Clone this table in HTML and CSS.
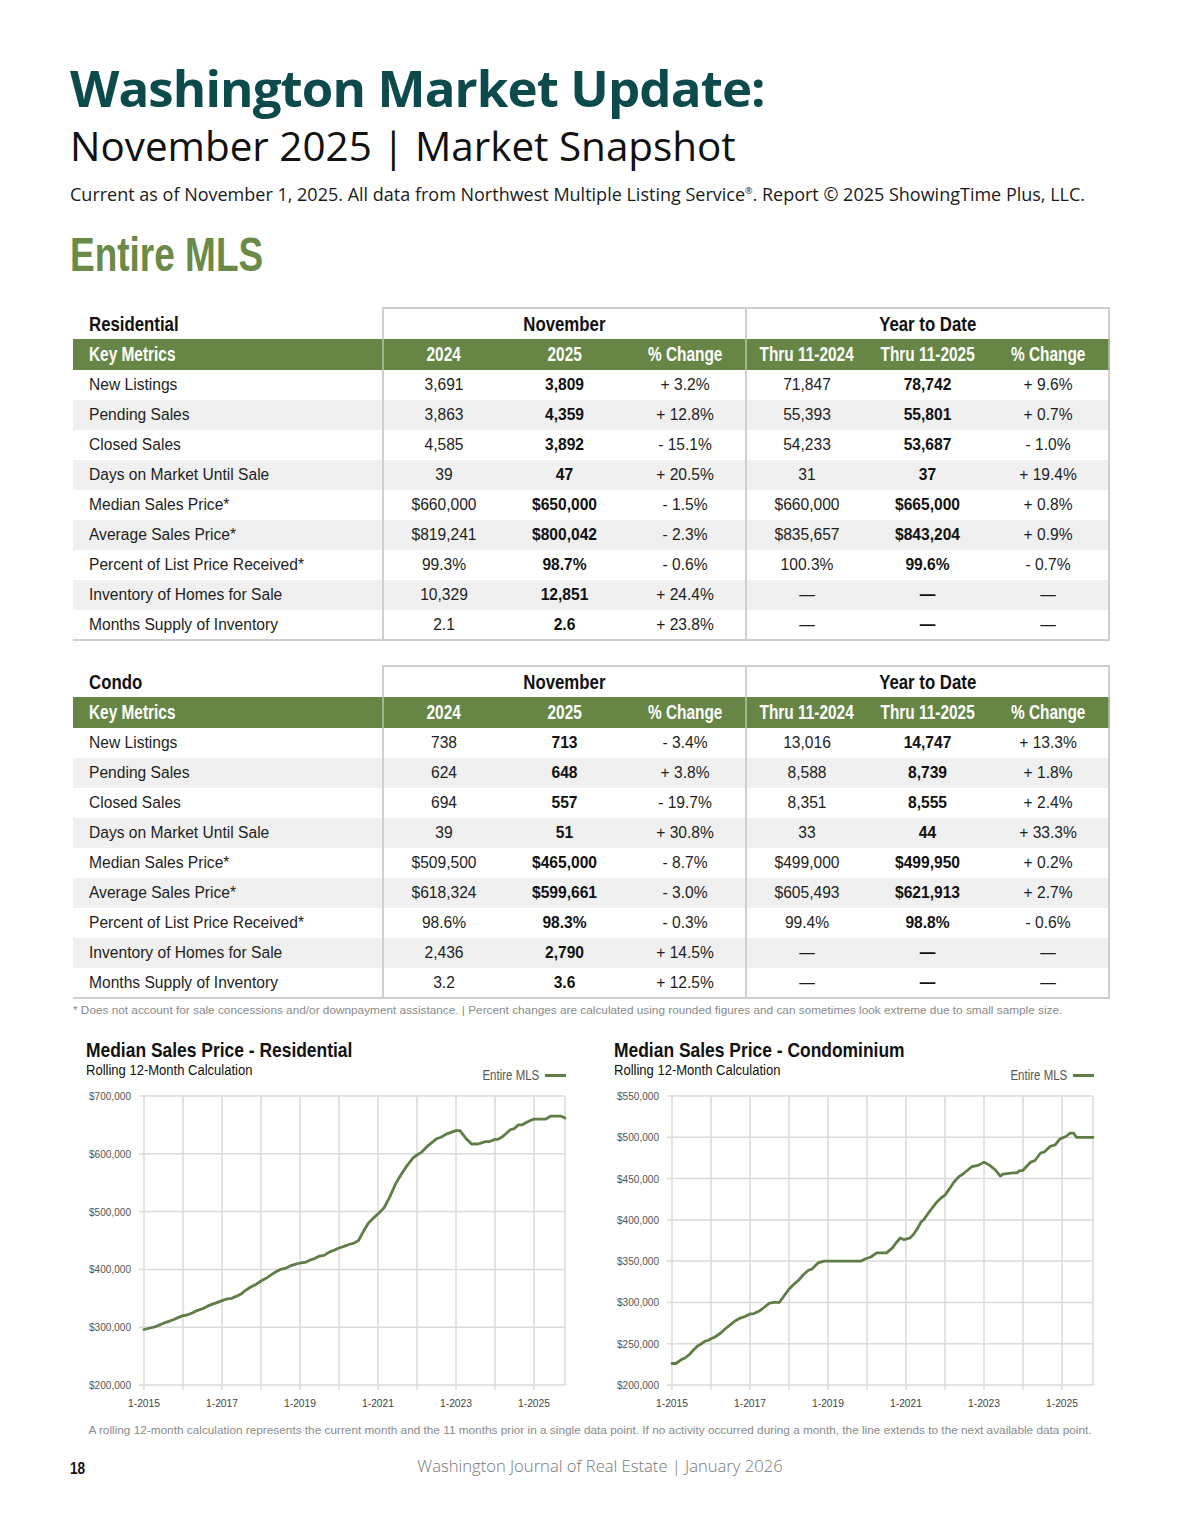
FILE: index.html
```html
<!DOCTYPE html>
<html lang="en">
<head>
<meta charset="utf-8">
<title>Washington Market Update: November 2025</title>
<link rel="stylesheet" href="styles.css">
</head>
<body>
<div class="page">
  <h1 class="title">Washington Market Update:</h1>
  <h2 class="subtitle">November 2025 | Market Snapshot</h2>
  <p class="source">Current as of November 1, 2025. All data from Northwest Multiple Listing Service<sup>®</sup>. Report © 2025 ShowingTime Plus, LLC.</p>
  <h3 class="section"><span class="cx">Entire MLS</span></h3>

  <table class="metrics">
    <colgroup><col class="c-name"><col class="c-num"><col class="c-num"><col class="c-num"><col class="c-num"><col class="c-num"><col class="c-num"></colgroup>
    <thead>
      <tr class="group-row"><th class="label"><span class="cx">Residential</span></th><th colspan="3" class="grp first"><span class="cx">November</span></th><th colspan="3" class="grp ytd last"><span class="cx">Year to Date</span></th></tr>
      <tr class="green-row"><th class="label"><span class="cx">Key Metrics</span></th><th class="first"><span class="cx">2024</span></th><th><span class="cx">2025</span></th><th><span class="cx">% Change</span></th><th class="ytd"><span class="cx">Thru 11-2024</span></th><th><span class="cx">Thru 11-2025</span></th><th class="last"><span class="cx">% Change</span></th></tr>
    </thead>
    <tbody>
      <tr><td class="label">New Listings</td><td class="first">3,691</td><td class="b">3,809</td><td>+ 3.2%</td><td class="ytd">71,847</td><td class="b">78,742</td><td class="last">+ 9.6%</td></tr>
      <tr class="alt"><td class="label">Pending Sales</td><td class="first">3,863</td><td class="b">4,359</td><td>+ 12.8%</td><td class="ytd">55,393</td><td class="b">55,801</td><td class="last">+ 0.7%</td></tr>
      <tr><td class="label">Closed Sales</td><td class="first">4,585</td><td class="b">3,892</td><td>- 15.1%</td><td class="ytd">54,233</td><td class="b">53,687</td><td class="last">- 1.0%</td></tr>
      <tr class="alt"><td class="label">Days on Market Until Sale</td><td class="first">39</td><td class="b">47</td><td>+ 20.5%</td><td class="ytd">31</td><td class="b">37</td><td class="last">+ 19.4%</td></tr>
      <tr><td class="label">Median Sales Price*</td><td class="first">$660,000</td><td class="b">$650,000</td><td>- 1.5%</td><td class="ytd">$660,000</td><td class="b">$665,000</td><td class="last">+ 0.8%</td></tr>
      <tr class="alt"><td class="label">Average Sales Price*</td><td class="first">$819,241</td><td class="b">$800,042</td><td>- 2.3%</td><td class="ytd">$835,657</td><td class="b">$843,204</td><td class="last">+ 0.9%</td></tr>
      <tr><td class="label">Percent of List Price Received*</td><td class="first">99.3%</td><td class="b">98.7%</td><td>- 0.6%</td><td class="ytd">100.3%</td><td class="b">99.6%</td><td class="last">- 0.7%</td></tr>
      <tr class="alt"><td class="label">Inventory of Homes for Sale</td><td class="first">10,329</td><td class="b">12,851</td><td>+ 24.4%</td><td class="ytd">—</td><td class="b">—</td><td class="last">—</td></tr>
      <tr class="end"><td class="label">Months Supply of Inventory</td><td class="first">2.1</td><td class="b">2.6</td><td>+ 23.8%</td><td class="ytd">—</td><td class="b">—</td><td class="last">—</td></tr>
    </tbody>
  </table>

  <table class="metrics second">
    <colgroup><col class="c-name"><col class="c-num"><col class="c-num"><col class="c-num"><col class="c-num"><col class="c-num"><col class="c-num"></colgroup>
    <thead>
      <tr class="group-row"><th class="label"><span class="cx">Condo</span></th><th colspan="3" class="grp first"><span class="cx">November</span></th><th colspan="3" class="grp ytd last"><span class="cx">Year to Date</span></th></tr>
      <tr class="green-row"><th class="label"><span class="cx">Key Metrics</span></th><th class="first"><span class="cx">2024</span></th><th><span class="cx">2025</span></th><th><span class="cx">% Change</span></th><th class="ytd"><span class="cx">Thru 11-2024</span></th><th><span class="cx">Thru 11-2025</span></th><th class="last"><span class="cx">% Change</span></th></tr>
    </thead>
    <tbody>
      <tr><td class="label">New Listings</td><td class="first">738</td><td class="b">713</td><td>- 3.4%</td><td class="ytd">13,016</td><td class="b">14,747</td><td class="last">+ 13.3%</td></tr>
      <tr class="alt"><td class="label">Pending Sales</td><td class="first">624</td><td class="b">648</td><td>+ 3.8%</td><td class="ytd">8,588</td><td class="b">8,739</td><td class="last">+ 1.8%</td></tr>
      <tr><td class="label">Closed Sales</td><td class="first">694</td><td class="b">557</td><td>- 19.7%</td><td class="ytd">8,351</td><td class="b">8,555</td><td class="last">+ 2.4%</td></tr>
      <tr class="alt"><td class="label">Days on Market Until Sale</td><td class="first">39</td><td class="b">51</td><td>+ 30.8%</td><td class="ytd">33</td><td class="b">44</td><td class="last">+ 33.3%</td></tr>
      <tr><td class="label">Median Sales Price*</td><td class="first">$509,500</td><td class="b">$465,000</td><td>- 8.7%</td><td class="ytd">$499,000</td><td class="b">$499,950</td><td class="last">+ 0.2%</td></tr>
      <tr class="alt"><td class="label">Average Sales Price*</td><td class="first">$618,324</td><td class="b">$599,661</td><td>- 3.0%</td><td class="ytd">$605,493</td><td class="b">$621,913</td><td class="last">+ 2.7%</td></tr>
      <tr><td class="label">Percent of List Price Received*</td><td class="first">98.6%</td><td class="b">98.3%</td><td>- 0.3%</td><td class="ytd">99.4%</td><td class="b">98.8%</td><td class="last">- 0.6%</td></tr>
      <tr class="alt"><td class="label">Inventory of Homes for Sale</td><td class="first">2,436</td><td class="b">2,790</td><td>+ 14.5%</td><td class="ytd">—</td><td class="b">—</td><td class="last">—</td></tr>
      <tr class="end"><td class="label">Months Supply of Inventory</td><td class="first">3.2</td><td class="b">3.6</td><td>+ 12.5%</td><td class="ytd">—</td><td class="b">—</td><td class="last">—</td></tr>
    </tbody>
  </table>
  <p class="footnote">* Does not account for sale concessions and/or downpayment assistance. | Percent changes are calculated using rounded figures and can sometimes look extreme due to small sample size.</p>

  <div class="charts">
    <div class="chart">
      <div class="chart-head">
        <div class="chart-titles">
          <div class="chart-title"><span class="cx">Median Sales Price - Residential</span></div>
          <div class="chart-sub"><span class="cx">Rolling 12-Month Calculation</span></div>
        </div>
        <div class="legend"><span class="cx">Entire MLS</span><span class="legend-line"></span></div>
      </div>
      <svg class="plot" width="490" height="326" viewBox="0 0 490 326">
        <g class="grid">
          <line x1="64" y1="10" x2="485" y2="10"/><line x1="64" y1="67.8" x2="485" y2="67.8"/><line x1="64" y1="125.6" x2="485" y2="125.6"/><line x1="64" y1="183.4" x2="485" y2="183.4"/><line x1="64" y1="241.2" x2="485" y2="241.2"/><line x1="59" y1="299" x2="485" y2="299"/>
          <line x1="59" y1="10" x2="64" y2="10"/><line x1="59" y1="67.8" x2="64" y2="67.8"/><line x1="59" y1="125.6" x2="64" y2="125.6"/><line x1="59" y1="183.4" x2="64" y2="183.4"/><line x1="59" y1="241.2" x2="64" y2="241.2"/>
          <line x1="64" y1="10" x2="64" y2="304"/><line x1="103" y1="10" x2="103" y2="304"/><line x1="142" y1="10" x2="142" y2="304"/><line x1="181" y1="10" x2="181" y2="304"/><line x1="220" y1="10" x2="220" y2="304"/><line x1="259" y1="10" x2="259" y2="304"/><line x1="298" y1="10" x2="298" y2="304"/><line x1="337" y1="10" x2="337" y2="304"/><line x1="376" y1="10" x2="376" y2="304"/><line x1="415" y1="10" x2="415" y2="304"/><line x1="454" y1="10" x2="454" y2="304"/><line x1="485" y1="10" x2="485" y2="299"/>
        </g>
        <g class="ylab">
          <text x="51" y="14" textLength="42" lengthAdjust="spacingAndGlyphs">$700,000</text><text x="51" y="71.8" textLength="42" lengthAdjust="spacingAndGlyphs">$600,000</text><text x="51" y="129.6" textLength="42" lengthAdjust="spacingAndGlyphs">$500,000</text><text x="51" y="187.4" textLength="42" lengthAdjust="spacingAndGlyphs">$400,000</text><text x="51" y="245.2" textLength="42" lengthAdjust="spacingAndGlyphs">$300,000</text><text x="51" y="303" textLength="42" lengthAdjust="spacingAndGlyphs">$200,000</text>
        </g>
        <g class="xlab">
          <text x="64" y="321" textLength="32" lengthAdjust="spacingAndGlyphs">1-2015</text><text x="142" y="321" textLength="32" lengthAdjust="spacingAndGlyphs">1-2017</text><text x="220" y="321" textLength="32" lengthAdjust="spacingAndGlyphs">1-2019</text><text x="298" y="321" textLength="32" lengthAdjust="spacingAndGlyphs">1-2021</text><text x="376" y="321" textLength="32" lengthAdjust="spacingAndGlyphs">1-2023</text><text x="454" y="321" textLength="32" lengthAdjust="spacingAndGlyphs">1-2025</text>
        </g>
        <polyline class="series" points="64,243.5 68,242.5 73.75,241.2 78,239.6 83.5,237.2 88,235.6 93.25,233.7 98,231.6 103,229.6 107,229 112.75,226.8 117,224.6 122.5,222.7 127,220.4 132.25,218.1 137,216.6 142,214.6 146,213.2 151.75,212.3 156,210.4 161.5,207.7 166,204 171.25,200.7 176,198.4 181,195 186,192.3 190.75,189.2 196,185.8 200.5,183.4 205,182.4 210.25,179.9 215,178.4 220,177 225,176.4 229.75,174.2 234,172.8 239.5,170.1 244,169.4 249.25,166.1 254,164.2 259,162 264,160.4 268.75,158.5 274,157.1 278.5,154.5 283.2,145.8 288.25,137.2 293,132.4 298,127.9 303.85,122.1 309.7,111.2 315.55,97.9 321.4,88 327.25,79.4 333.1,71.8 337,69 341.7,66.1 348.7,59.1 356.5,52.8 361,51.2 366.25,48.1 371,46.4 376,44.7 379.9,44.7 385.75,52.2 391.6,58 397.45,58 401,57.1 405.25,55.7 409,55.7 415,53.4 418,53.4 422.8,50.5 430.6,43.5 434,42.8 438.4,38.9 442,38.9 446.2,36.6 451,34.2 454,33.1 465.7,33.1 470.4,30.2 481.3,30.2 485,32"/>
      </svg>
    </div>
    <div class="chart">
      <div class="chart-head">
        <div class="chart-titles">
          <div class="chart-title"><span class="cx">Median Sales Price - Condominium</span></div>
          <div class="chart-sub"><span class="cx">Rolling 12-Month Calculation</span></div>
        </div>
        <div class="legend"><span class="cx">Entire MLS</span><span class="legend-line"></span></div>
      </div>
      <svg class="plot" width="490" height="326" viewBox="0 0 490 326">
        <g class="grid">
          <line x1="64" y1="10" x2="485" y2="10"/><line x1="64" y1="51.3" x2="485" y2="51.3"/><line x1="64" y1="92.6" x2="485" y2="92.6"/><line x1="64" y1="133.9" x2="485" y2="133.9"/><line x1="64" y1="175.1" x2="485" y2="175.1"/><line x1="64" y1="216.4" x2="485" y2="216.4"/><line x1="64" y1="257.7" x2="485" y2="257.7"/><line x1="59" y1="299" x2="485" y2="299"/>
          <line x1="59" y1="10" x2="64" y2="10"/><line x1="59" y1="51.3" x2="64" y2="51.3"/><line x1="59" y1="92.6" x2="64" y2="92.6"/><line x1="59" y1="133.9" x2="64" y2="133.9"/><line x1="59" y1="175.1" x2="64" y2="175.1"/><line x1="59" y1="216.4" x2="64" y2="216.4"/><line x1="59" y1="257.7" x2="64" y2="257.7"/>
          <line x1="64" y1="10" x2="64" y2="304"/><line x1="103" y1="10" x2="103" y2="304"/><line x1="142" y1="10" x2="142" y2="304"/><line x1="181" y1="10" x2="181" y2="304"/><line x1="220" y1="10" x2="220" y2="304"/><line x1="259" y1="10" x2="259" y2="304"/><line x1="298" y1="10" x2="298" y2="304"/><line x1="337" y1="10" x2="337" y2="304"/><line x1="376" y1="10" x2="376" y2="304"/><line x1="415" y1="10" x2="415" y2="304"/><line x1="454" y1="10" x2="454" y2="304"/><line x1="485" y1="10" x2="485" y2="299"/>
        </g>
        <g class="ylab">
          <text x="51" y="14" textLength="42" lengthAdjust="spacingAndGlyphs">$550,000</text><text x="51" y="55.3" textLength="42" lengthAdjust="spacingAndGlyphs">$500,000</text><text x="51" y="96.6" textLength="42" lengthAdjust="spacingAndGlyphs">$450,000</text><text x="51" y="137.9" textLength="42" lengthAdjust="spacingAndGlyphs">$400,000</text><text x="51" y="179.1" textLength="42" lengthAdjust="spacingAndGlyphs">$350,000</text><text x="51" y="220.4" textLength="42" lengthAdjust="spacingAndGlyphs">$300,000</text><text x="51" y="261.7" textLength="42" lengthAdjust="spacingAndGlyphs">$250,000</text><text x="51" y="303" textLength="42" lengthAdjust="spacingAndGlyphs">$200,000</text>
        </g>
        <g class="xlab">
          <text x="64" y="321" textLength="32" lengthAdjust="spacingAndGlyphs">1-2015</text><text x="142" y="321" textLength="32" lengthAdjust="spacingAndGlyphs">1-2017</text><text x="220" y="321" textLength="32" lengthAdjust="spacingAndGlyphs">1-2019</text><text x="298" y="321" textLength="32" lengthAdjust="spacingAndGlyphs">1-2021</text><text x="376" y="321" textLength="32" lengthAdjust="spacingAndGlyphs">1-2023</text><text x="454" y="321" textLength="32" lengthAdjust="spacingAndGlyphs">1-2025</text>
        </g>
        <polyline class="series" points="64,277.5 67.9,277.5 73.75,273.4 77,272 81.55,268.4 85,264.5 89.35,260.2 93,258 97.15,255.2 100,254.5 103,252.8 107,251 112.75,247 117,243 122.5,238.7 127,235 132.25,232.1 137,230.5 142,228 146,227.6 151.75,224.7 156,221.5 161.5,217.2 166,216.4 171.25,216.4 176,210 181,203.2 185,199 190.75,194.1 195,189 200.5,184.2 204,183 210.25,176.8 216.1,175.1 253.2,175.1 257,173 262.9,171 268.75,166.9 278.5,166.9 284.4,161.9 288,157 292.2,152 296.1,153.7 301.9,152 305,149 309.7,142.1 313,136 315.55,133.9 319,129 321.4,125.6 325,121 329.2,115.7 333,112 337,109.1 342.85,100.8 346,96 350.65,90.9 355,88 360.4,83.5 364,80.6 370.15,79.4 376,76.1 381.85,79.4 387.7,84.3 392.4,90.1 395,88.2 399.4,87.6 405,86.8 409.15,86.8 411,85 415,84.3 418,81 422.8,76.1 427,74.5 432.55,67 436,66.2 442.3,60.4 447,59 452.05,52.9 457.9,50.5 461.8,47.2 465.7,47.2 468.4,51.3 485,51.3"/>
      </svg>
    </div>
  </div>
  <p class="chart-note">A rolling 12-month calculation represents the current month and the 11 months prior in a single data point. If no activity occurred during a month, the line extends to the next available data point.</p>

  <footer class="footer">
    <span class="page-num"><span class="cx">18</span></span>
    <span class="journal">Washington Journal of Real Estate | January 2026</span>
    <span></span>
  </footer>
</div>
</body>
</html>
```

FILE: styles.css
```css
html, body {
  margin: 0;
  padding: 0;
  background: #ffffff;
}

.page {
  width: 1200px;
  height: 1535px;
  box-sizing: border-box;
  padding: 57px 0 0 70px;
  font-family: "Open Sans", "Liberation Sans", sans-serif;
  color: #111;
}

/* condensed face simulation (Helvetica Condensed is not installed) */
.cx {
  display: inline-block;
  white-space: nowrap;
  transform: scaleX(0.8);
  transform-origin: center;
}

.title {
  margin: 0;
  font-family: "Open Sans", sans-serif;
  font-weight: 700;
  font-size: 51px;
  line-height: 60px;
  color: #0c4a4c;
  letter-spacing: -0.9px;
}

.subtitle {
  margin: 5px 0 0;
  font-family: "Open Sans", sans-serif;
  font-weight: 500;
  font-size: 40.4px;
  line-height: 48px;
  color: #111;
}

.source {
  margin: 12px 0 0;
  font-size: 18px;
  line-height: 24px;
  color: #1a1a1a;
}

.source sup {
  font-size: 9px;
  vertical-align: 7px;
  line-height: 0;
}

.section {
  margin: 22px 0 0;
  font-family: "Liberation Sans", Arial, sans-serif;
  font-weight: 700;
  font-size: 49px;
  line-height: 52px;
  color: #6a8a48;
}

.section .cx {
  transform: scaleX(0.755);
  transform-origin: left center;
}

/* ---------- tables ---------- */
.metrics {
  margin: 27px 0 0 3px;
  width: 1037px;
  border-collapse: collapse;
  table-layout: fixed;
  font-family: "Liberation Sans", Arial, sans-serif;
  font-size: 15.6px;
  color: #1e1e1e;
}

.metrics.second {
  margin-top: 24px;
}

.c-name { width: 310px; }
.c-num { width: 121px; }

.metrics th,
.metrics td {
  padding: 0;
  text-align: center;
  white-space: nowrap;
}

.metrics .label {
  text-align: left;
  padding-left: 16px;
}

.metrics .label .cx {
  transform-origin: left center;
}

.metrics tbody tr {
  height: 30px;
}

.metrics tbody tr.alt {
  background: #f0f0f0;
}

.metrics .b {
  font-weight: 700;
  color: #111;
}

.group-row {
  height: 31px;
}

.group-row th {
  font-family: "Liberation Sans", Arial, sans-serif;
  font-weight: 700;
  font-size: 21px;
  color: #111;
  vertical-align: middle;
}

.group-row .grp {
  border-top: 2px solid #cfcfcf;
}

.green-row {
  height: 31px;
  background: #678646;
}

.green-row th {
  font-family: "Liberation Sans", Arial, sans-serif;
  font-weight: 700;
  font-size: 19.5px;
  color: #ffffff;
}

.green-row .cx {
  transform: scaleX(0.79);
}

.metrics .first,
.metrics .ytd {
  border-left: 2px solid #cfcfcf;
}

.metrics .last {
  border-right: 2px solid #cfcfcf;
}

.green-row .first,
.green-row .ytd {
  border-left-color: #a4b590;
}

.green-row .last {
  border-right-color: #a4b590;
}

.metrics tr.end td {
  border-bottom: 2px solid #cfcfcf;
}

.footnote {
  margin: 3px 0 0 3px;
  font-family: "Liberation Sans", Arial, sans-serif;
  font-size: 11.8px;
  line-height: 16px;
  color: #8a8a8a;
}

/* ---------- charts ---------- */
.charts {
  display: flex;
  gap: 38px;
  margin: 21px 0 0 10px;
}

.chart {
  width: 490px;
}

.chart-head {
  display: flex;
  justify-content: space-between;
  align-items: flex-start;
  padding-left: 6px;
  height: 47px;
}

.chart-titles .cx {
  transform-origin: left center;
}

.chart-title {
  font-family: "Liberation Sans", Arial, sans-serif;
  font-weight: 700;
  font-size: 21px;
  line-height: 22px;
  color: #111;
}

.chart-title .cx {
  transform: scaleX(0.83);
}

.chart-sub {
  font-family: "Liberation Sans", Arial, sans-serif;
  font-size: 15.5px;
  line-height: 18px;
  color: #111;
}

.chart-sub .cx {
  transform: scaleX(0.84);
}

.legend {
  align-self: flex-end;
  display: flex;
  align-items: center;
  margin: 0 4px 3px 0;
  font-family: "Liberation Sans", Arial, sans-serif;
  font-size: 14px;
  line-height: 16px;
  color: #555;
}

.legend .cx {
  transform: scaleX(0.82);
  transform-origin: right center;
  margin-right: 6px;
}

.legend-line {
  display: inline-block;
  width: 21px;
  height: 3px;
  background: #5f7d45;
}

.plot {
  display: block;
}

.grid line {
  stroke: #dadada;
  stroke-width: 1.5;
}

.ylab text {
  font-family: "Liberation Sans", Arial, sans-serif;
  font-size: 11px;
  fill: #555;
  text-anchor: end;
}

.xlab text {
  font-family: "Liberation Sans", Arial, sans-serif;
  font-size: 11.5px;
  fill: #444;
  text-anchor: middle;
}

.series {
  fill: none;
  stroke: #5f7d45;
  stroke-width: 2.8;
  stroke-linejoin: round;
  stroke-linecap: round;
}

.chart-note {
  margin: 10px 0 0 10px;
  width: 1020px;
  text-align: center;
  font-family: "Liberation Sans", Arial, sans-serif;
  font-size: 11.8px;
  line-height: 16px;
  color: #8a8a8a;
}

.footer {
  display: grid;
  grid-template-columns: 1fr auto 1fr;
  align-items: center;
  width: 1060px;
  margin-top: 14px;
}

.page-num {
  font-family: "Liberation Sans", Arial, sans-serif;
  font-weight: 700;
  font-size: 16px;
  color: #111;
  padding-top: 8px;
}

.page-num .cx {
  transform: scaleX(0.85);
  transform-origin: left center;
}

.journal {
  font-family: "Open Sans", sans-serif;
  font-weight: 300;
  font-size: 16.6px;
  color: #777;
}
```
